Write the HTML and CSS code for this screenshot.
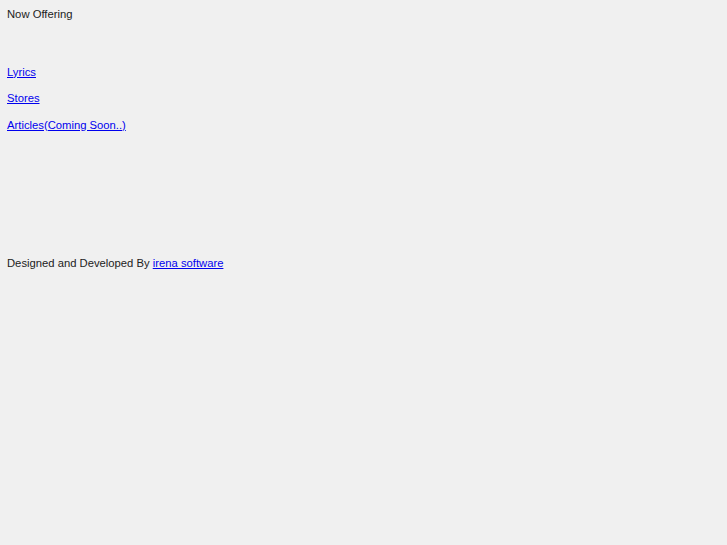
FILE: index.html
```
<!DOCTYPE html>
<html>
<head>
<meta charset="utf-8">
<link rel="stylesheet" href="styles.css">
</head>
<body>
<div class="page">
  <div class="title">Now Offering</div>
  <ul class="links">
    <li><a href="#">Lyrics</a></li>
    <li><a href="#">Stores</a></li>
    <li><a href="#">Articles(Coming Soon..)</a></li>
  </ul>
  <div class="footer">Designed and Developed By <a href="#">irena software</a></div>
</div>
</body>
</html>
```
FILE: styles.css
```
html, body {
  background: #f0f0f0;
}
body {
  margin: 8px 7px;
  font-family: "Liberation Sans", Arial, sans-serif;
  font-size: 11.25px;
  line-height: 13px;
  color: #222;
}
a {
  color: #0000ee;
}
.title {
  margin: 0;
}
.links {
  list-style: none;
  margin: 44.5px 0 0 0;
  padding: 0;
  display: flex;
  flex-direction: column;
  gap: 13.5px;
}
.footer {
  margin-top: 125.5px;
}
```
